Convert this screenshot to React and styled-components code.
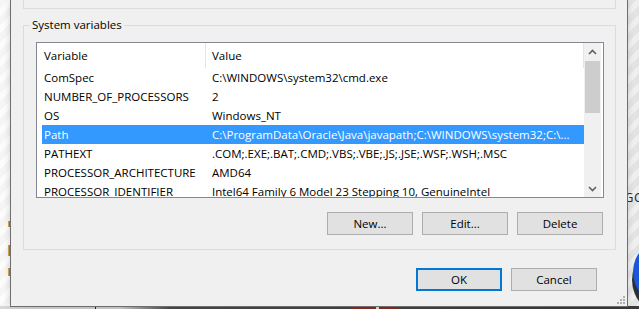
import React from "react";
import styled, { createGlobalStyle } from "styled-components";

const GlobalStyle = createGlobalStyle`
  html, body { margin: 0; padding: 0; }
  body {
    width: 639px;
    height: 309px;
    overflow: hidden;
    font-family: "Open Sans", "Liberation Sans", sans-serif;
  }
`;

const FONT = `"Open Sans", "Liberation Sans", sans-serif`;
const SIZE = "11.5px";
const SPACING = "0px";

const Desktop = styled.div`
  position: relative;
  width: 639px;
  height: 309px;
  overflow: hidden;
  background:
    repeating-linear-gradient(135deg, rgba(0,0,0,0.025) 0 6px, rgba(255,255,255,0.3) 6px 12px),
    linear-gradient(90deg, #fbfbfb 0px, #f3f3f3 620px, #e6e6e6 639px);
`;

const BottomStrip = styled.div`
  position: absolute;
  left: 0;
  right: 0;
  bottom: 0;
  height: 3px;
  background: linear-gradient(90deg, #d8d8d8 0px, #cfcfcf 120px, #4a4a4a 170px, #3a3a3a 639px);
`;

const StripMark = styled.div`
  position: absolute;
  bottom: 0;
  height: 3px;
  left: ${(p) => p.$x}px;
  width: ${(p) => p.$w}px;
  background: ${(p) => p.$c};
`;

const EdgeMark = styled.div`
  position: absolute;
  left: 8px;
  width: 3px;
  top: ${(p) => p.$y}px;
  height: ${(p) => p.$h}px;
  background: linear-gradient(90deg, #e8c060, #7a2a20);
`;

const BehindText = styled.div`
  position: absolute;
  left: 624px;
  top: 188px;
  font: 13px ${FONT};
  color: #2a2a2a;
  letter-spacing: 0.5px;
`;

const Orb = styled.svg`
  position: absolute;
  left: 628px;
  top: 240px;
`;

const Window = styled.div`
  position: absolute;
  left: 10px;
  top: 0;
  width: 618px;
  box-sizing: border-box;
  background: #f0f0f0;
  border: 1px solid #6e6e6e;
  border-top: none;
  padding: 0 11px 15px 12px;
  box-shadow: 0 0 7px rgba(0, 0, 0, 0.16);
  font: ${SIZE} ${FONT};
  letter-spacing: ${SPACING};
  color: #000;
`;

const UpperGroup = styled.div`
  height: 9px;
  box-sizing: border-box;
  border: 1px solid #dcdcdc;
  border-top: none;
`;

const GroupBox = styled.fieldset`
  margin: 8px 0 0 0;
  min-width: 0;
  border: 1px solid #dcdcdc;
  padding: 9px 11px 14px 12px;
`;

const Legend = styled.legend`
  margin-left: -6px;
  padding: 0 2px;
  font: ${SIZE} ${FONT};
  line-height: 16px;
  color: #000;
`;

const ListBox = styled.div`
  height: 156px;
  box-sizing: border-box;
  border: 1px solid #828790;
  background: #fff;
  display: grid;
  grid-template-columns: 1fr 17px;
  padding-right: 2px;
`;

const Table = styled.div`
  display: flex;
  flex-direction: column;
  overflow: hidden;
  min-width: 0;
`;

const HeaderRow = styled.div`
  display: flex;
  height: 25px;
  padding-left: 5px;
  flex-shrink: 0;
`;

const HeaderCell = styled.div`
  box-sizing: border-box;
  border-right: 1px solid #e5e5e5;
  line-height: 25px;
  white-space: nowrap;
  ${(p) => (p.$first ? "width: 164px; padding-left: 2px;" : "flex: 1; padding-left: 6px;")}
`;

const Row = styled.div`
  display: flex;
  height: 19px;
  margin-left: 5px;
  flex-shrink: 0;
  background: ${(p) => (p.$selected ? "#3399ff" : "transparent")};
  color: ${(p) => (p.$selected ? "#fff" : "#000")};
`;

const Cell = styled.div`
  box-sizing: border-box;
  line-height: 19px;
  white-space: nowrap;
  overflow: hidden;
  ${(p) => (p.$first ? "width: 164px; padding-left: 2px; flex-shrink: 0;" : "flex: 1; padding-left: 6px; min-width: 0;")}
`;

const ScrollBar = styled.div`
  display: flex;
  flex-direction: column;
  background: #f0f0f0;
`;

const ArrowButton = styled.div`
  height: 17px;
  display: flex;
  align-items: center;
  justify-content: center;
  flex-shrink: 0;
  margin-top: ${(p) => (p.$bottom ? "auto" : "0")};
`;

const Thumb = styled.div`
  margin: 1px 1px 0 1px;
  height: 52px;
  background: #cdcdcd;
`;

const ButtonRow = styled.div`
  display: flex;
  justify-content: flex-end;
  gap: 9px;
  margin-top: 14px;
  padding-right: 1px;
`;

const DialogActions = styled.div`
  display: flex;
  justify-content: flex-end;
  gap: 9px;
  margin-top: 18px;
  padding-right: 19px;
`;

const Button = styled.button`
  width: 86px;
  height: 23px;
  box-sizing: border-box;
  padding: 0;
  background: #e1e1e1;
  border: ${(p) => (p.$default ? "2px solid #0078d7" : "1px solid #adadad")};
  font: ${SIZE} ${FONT};
  letter-spacing: ${SPACING};
  color: #000;
  border-radius: 0;
`;

const Grip = styled.svg`
  position: absolute;
  right: 2px;
  bottom: 2px;
`;

const Chevron = ({ up }) => (
  <svg width="9" height="6" viewBox="0 0 9 6">
    <path
      d={up ? "M1 5 L4.5 1.5 L8 5" : "M1 1 L4.5 4.5 L8 1"}
      fill="none"
      stroke="#606060"
      strokeWidth="1.6"
    />
  </svg>
);

const rows = [
  ["ComSpec", "C:\\WINDOWS\\system32\\cmd.exe"],
  ["NUMBER_OF_PROCESSORS", "2"],
  ["OS", "Windows_NT"],
  ["Path", "C:\\ProgramData\\Oracle\\Java\\javapath;C:\\WINDOWS\\system32;C:\\..."],
  ["PATHEXT", ".COM;.EXE;.BAT;.CMD;.VBS;.VBE;.JS;.JSE;.WSF;.WSH;.MSC"],
  ["PROCESSOR_ARCHITECTURE", "AMD64"],
  ["PROCESSOR_IDENTIFIER", "Intel64 Family 6 Model 23 Stepping 10, GenuineIntel"],
  ["PROCESSOR_LEVEL", "6"],
];

export default function App() {
  return (
    <>
      <GlobalStyle />
      <Desktop>
        <EdgeMark $y={221} $h={6} />
        <EdgeMark $y={245} $h={11} />
        <EdgeMark $y={268} $h={8} />
        <BehindText>GC</BehindText>
        <Orb width="11" height="69" viewBox="0 0 11 69">
          <circle cx="40" cy="40" r="36" fill="#2a2f38" />
          <circle cx="38" cy="32" r="33" fill="#1d56d8" />
        </Orb>
        <BottomStrip />
        <StripMark $x={95} $w={1} $c="#222" />
        <StripMark $x={352} $w={46} $c="#8a2a1e" />
        <StripMark $x={376} $w={3} $c="#e0e0e0" />
        <Window>
          <UpperGroup />
          <GroupBox>
            <Legend>System variables</Legend>
            <ListBox>
              <Table>
                <HeaderRow>
                  <HeaderCell $first>Variable</HeaderCell>
                  <HeaderCell>Value</HeaderCell>
                </HeaderRow>
                {rows.map(([name, value]) => (
                  <Row key={name} $selected={name === "Path"}>
                    <Cell $first>{name}</Cell>
                    <Cell>{value}</Cell>
                  </Row>
                ))}
              </Table>
              <ScrollBar>
                <ArrowButton>
                  <Chevron up />
                </ArrowButton>
                <Thumb />
                <ArrowButton $bottom>
                  <Chevron />
                </ArrowButton>
              </ScrollBar>
            </ListBox>
            <ButtonRow>
              <Button>New...</Button>
              <Button>Edit...</Button>
              <Button>Delete</Button>
            </ButtonRow>
          </GroupBox>
          <DialogActions>
            <Button $default>OK</Button>
            <Button>Cancel</Button>
          </DialogActions>
          <Grip width="10" height="10" viewBox="0 0 10 10">
            <rect x="8" y="2" width="2" height="2" fill="#b0b0b0" />
            <rect x="5" y="5" width="2" height="2" fill="#b0b0b0" />
            <rect x="8" y="5" width="2" height="2" fill="#b0b0b0" />
            <rect x="2" y="8" width="2" height="2" fill="#b0b0b0" />
            <rect x="5" y="8" width="2" height="2" fill="#b0b0b0" />
            <rect x="8" y="8" width="2" height="2" fill="#b0b0b0" />
          </Grip>
        </Window>
      </Desktop>
    </>
  );
}
